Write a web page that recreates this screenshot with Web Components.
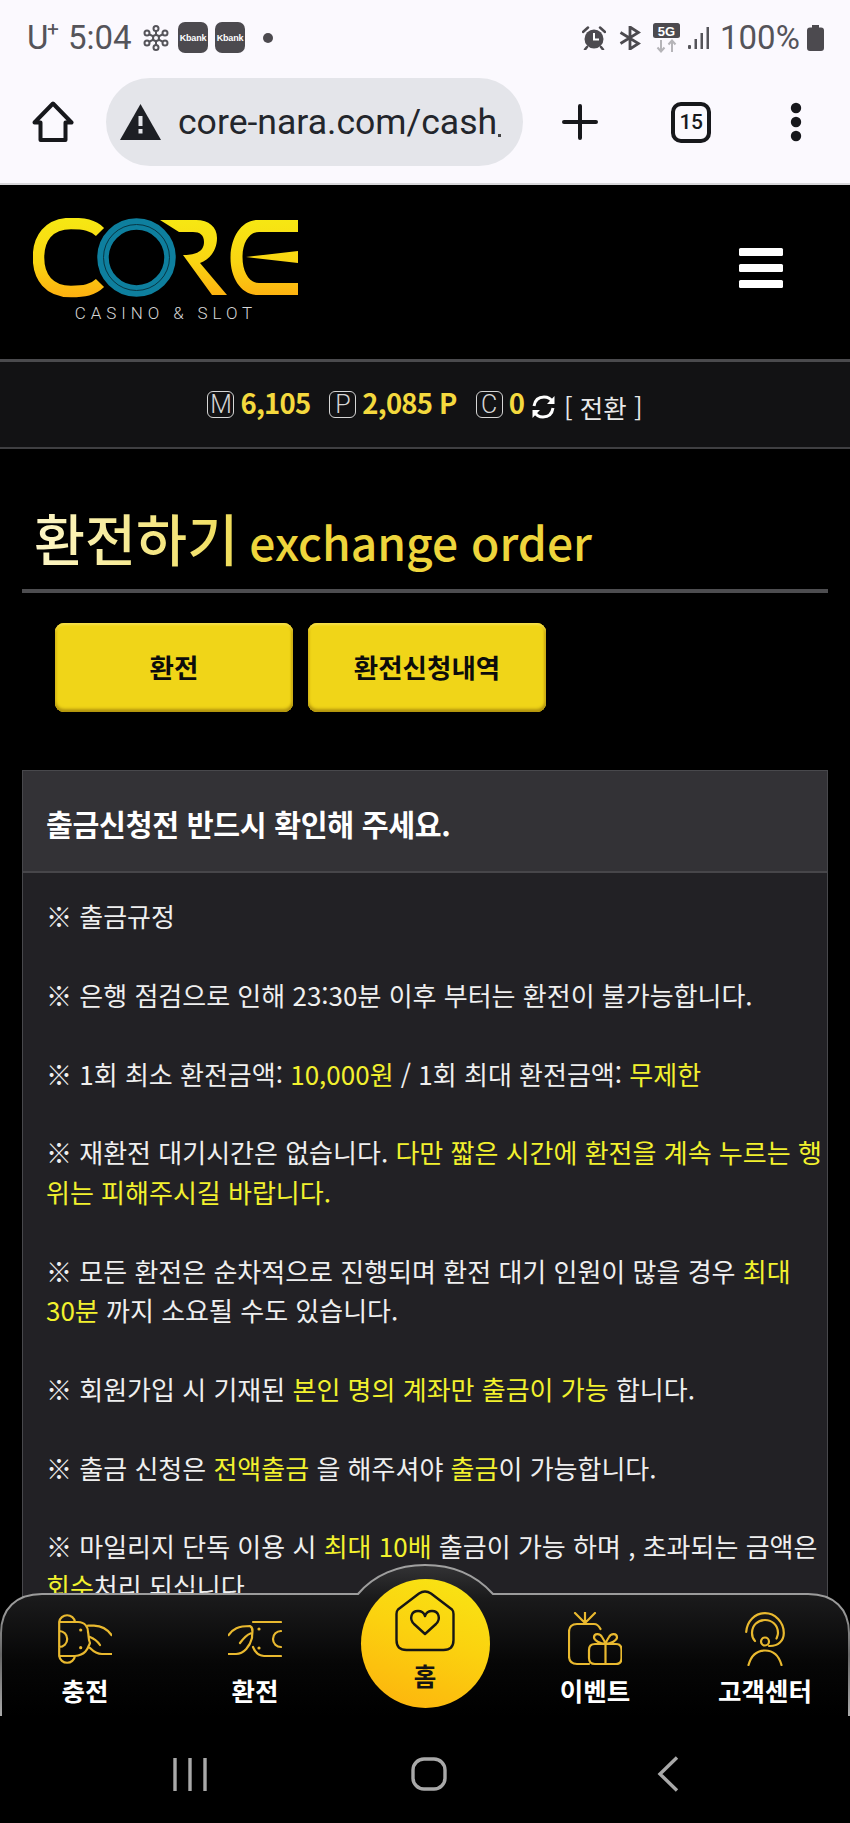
<!DOCTYPE html>
<html lang="ko">
<head>
<meta charset="utf-8">
<title>CORE 환전하기</title>
<style>
html,body{margin:0;padding:0;background:#000}
body{width:850px;height:1823px;overflow:hidden;font-family:"Noto Sans CJK KR","Noto Sans",sans-serif;display:flex;flex-direction:column}
</style>
</head>
<body>
<status-bar></status-bar>
<browser-bar url="core-nara.com/cash" tabs="15"></browser-bar>
<site-page>
  <site-header></site-header>
  <balance-bar></balance-bar>
  <page-title main="환전하기" sub="exchange order"></page-title>
  <tab-buttons><gold-button>환전</gold-button><gold-button>환전신청내역</gold-button></tab-buttons>
  <notice-card>
    <span slot="heading">출금신청전 반드시 확인해 주세요.</span>
    <notice-item>※ 출금규정</notice-item>
    <notice-item>※ 은행 점검으로 인해 23:30분 이후 부터는 환전이 불가능합니다.</notice-item>
    <notice-item>※ 1회 최소 환전금액: <hl-text>10,000원</hl-text> / 1회 최대 환전금액: <hl-text>무제한</hl-text></notice-item>
    <notice-item>※ 재환전 대기시간은 없습니다. <hl-text>다만 짧은 시간에 환전을 계속 누르는 행위는 피해주시길 바랍니다.</hl-text></notice-item>
    <notice-item>※ 모든 환전은 순차적으로 진행되며 환전 대기 인원이 많을 경우 <hl-text>최대 30분</hl-text> 까지 소요될 수도 있습니다.</notice-item>
    <notice-item>※ 회원가입 시 기재된 <hl-text>본인 명의 계좌만 출금이 가능</hl-text> 합니다.</notice-item>
    <notice-item>※ 출금 신청은 <hl-text>전액출금</hl-text> 을 해주셔야 <hl-text>출금</hl-text>이 가능합니다.</notice-item>
    <notice-item>※ 마일리지 단독 이용 시 <hl-text>최대 10배</hl-text> 출금이 가능 하며 , 초과되는 금액은 <hl-text>회수</hl-text>처리 되십니다.</notice-item>
  </notice-card>
  <bottom-nav>
    <nav-item label="충전"><svg viewBox="0 0 54 54" width="54" height="54" fill="none" stroke="#e9b92f" stroke-width="2.2" stroke-linecap="round" stroke-linejoin="round"><path d="M1.2 10V44M1.2 10A8 8 0 0 1 17 10M1.2 44A8 8 0 0 0 17 44M1.2 10H20C27 10 30 15 30 20C31 24 30 27 32 31C30 36 28 43 17 44H1.2M1.2 19A8 8 0 0 1 1.2 35M30 13.6H36C44 14 50 18 53.5 23M32 25C37 27 40 30 42 33M32 36C36 40 39 42 44 42H53.5"/><circle cx="22.7" cy="18" r="1.6" fill="#e9b92f" stroke="none"/><circle cx="22.7" cy="35.7" r="1.6" fill="#e9b92f" stroke="none"/></svg></nav-item>
    <nav-item label="환전"><svg viewBox="0 0 54 54" width="54" height="54" fill="none" stroke="#e9b92f" stroke-width="2.2" stroke-linecap="round" stroke-linejoin="round"><path d="M25 10H53M.6 23C5 17 10 14 22 14C26 16 24 20 24 26C22 34 16 42 8 42H.6M12 31C15 27 18 23 22.5 21.5M25 35C27 40 30 44 36 44H53M53 19A8 8 0 1 0 53 35"/><circle cx="31" cy="17" r="1.6" fill="#e9b92f" stroke="none"/><circle cx="31" cy="36" r="1.6" fill="#e9b92f" stroke="none"/></svg></nav-item>
    <home-button></home-button>
    <nav-item label="이벤트"><svg viewBox="0 0 54 54" width="54" height="54" fill="none" stroke="#e9b92f" stroke-width="2.2" stroke-linecap="round" stroke-linejoin="round"><path d="M17 11L7 1M17 11V.5M17 11L27 1M32.5 17C31 14 29 12 26 12H9C4 12 1 15 1 20V44C1 49 4 52 9 52H21M27 52H48C52 52 53.5 50 53.5 46V38C53.5 34 52 32 48 32H27C23 32 21 34 21 38V46C21 50 23 52 27 52ZM37.5 32V52M37.5 32C32 32 26 28 26 25.5C26 21 32 21 34 25C36 28 37 30 37.5 32C38 30 39 28 41 25C43 21 49 21 49 25.5C49 28 43 32 37.5 32Z"/></svg></nav-item>
    <nav-item label="고객센터"><svg viewBox="0 0 40 54" width="40" height="54" fill="none" stroke="#e9b92f" stroke-width="2.2" stroke-linecap="round" stroke-linejoin="round"><path d="M1.2 20C2 9 10 1.2 20 1.2C30 1.2 38.8 10 38.8 21C38.8 29 33 34 25 34H24M10 29C8 27 7 24 7 21C7 13 13 8 20 8C27 8 33 13 33 21C33 23 32 25 31.5 26.5M3.5 53C6 44 12 38.5 20 38.5C28 38.5 34 44 36.5 53"/><circle cx="20" cy="29.5" r="4"/></svg></nav-item>
  </bottom-nav>
</site-page>
<android-nav></android-nav>
<script>
const def=(name,css,html)=>{
  customElements.define(name,class extends HTMLElement{
    constructor(){super();const r=this.attachShadow({mode:'open'});
      r.innerHTML='<style>'+css+'</style>'+(typeof html==='function'?html(this):html);}
  });
};

def('status-bar',`
:host{display:flex;align-items:center;height:75px;background:#fbf9fe;color:#55545a;font:400 33px Roboto,sans-serif;flex:none;padding-left:27px;padding-right:26px;box-sizing:border-box}
.u{width:19px}.plus{font-size:21px;font-weight:400;align-self:flex-start;margin:19px 0 0 1px;line-height:1;width:21px}
.t{width:75px}
.k{display:flex;align-items:center;justify-content:center;width:30px;height:31px;border-radius:7px;background:#4c4a4f;color:#fff;font:700 9px "Liberation Sans",sans-serif;letter-spacing:-.2px;margin-right:7px}
.dot{width:10px;height:10px;border-radius:50%;background:#4c4a4f}
.sp{flex:1}
svg{display:block;flex:none}
.pct{margin-left:10px;width:87px}
`,`
<span class="u">U</span><span class="plus">+</span><span class="t">5:04</span>
<svg width="26" height="26" viewBox="0 0 26 26" fill="none" stroke="#55545a" stroke-width="2" style="margin-right:9px"><circle cx="13" cy="13" r="3"/><circle cx="13" cy="3.5" r="2.5"/><circle cx="13" cy="22.5" r="2.5"/><circle cx="4" cy="8" r="2.5"/><circle cx="22" cy="8" r="2.5"/><circle cx="4" cy="18" r="2.5"/><circle cx="22" cy="18" r="2.5"/><path d="M13 6V10M13 16V20M6 9.2L10.5 11.5M20 9.2L15.5 11.5M6 16.8L10.5 14.5M20 16.8L15.5 14.5"/></svg>
<span class="k">Kbank</span><span class="k">Kbank</span>
<span class="dot" style="margin-left:11px"></span>
<span class="sp"></span>
<svg width="24" height="24" viewBox="0 0 24 24" style="margin-right:13px"><circle cx="12" cy="13" r="9.5" fill="#4c4a4f"/><path d="M12 7V13.5H17" fill="none" stroke="#fff" stroke-width="2"/><path d="M1 6L6 1.5M23 6L18 1.5M5 21L3 23.5M19 21L21 23.5" stroke="#4c4a4f" stroke-width="2.5" stroke-linecap="round"/></svg>
<svg width="22" height="24" viewBox="0 0 22 24" fill="none" stroke="#4c4a4f" stroke-width="2.8" style="margin-right:12px"><path d="M1.5 6.5L19.5 17.5L11 23V1L19.5 6.5L1.5 17.5"/></svg>
<svg width="27" height="30" viewBox="0 0 27 30" style="margin-right:8px"><rect x="0" y="0" width="27" height="15" rx="2.5" fill="#4c4a4f"/><text x="13.5" y="12.5" text-anchor="middle" font-family="Liberation Sans" font-weight="700" font-size="13" fill="#fff">5G</text><path d="M8 17V28M4.5 24.5L8 28.5L11.5 24.5M19 29V18M15.5 21.5L19 17.5L22.5 21.5" fill="none" stroke="#b5b4b8" stroke-width="2"/></svg>
<svg width="22" height="24" viewBox="0 0 22 24" fill="#55545a"><rect x="0" y="19" width="3" height="4" rx="1"/><rect x="6.5" y="13" width="2.5" height="10"/><rect x="12.5" y="7" width="2.5" height="16"/><rect x="18.5" y="1" width="2.5" height="22"/></svg>
<span class="pct">100%</span>
<svg width="17" height="26" viewBox="0 0 17 26"><path d="M5 0H12V2.5H14C16 2.5 17 3.5 17 5.5V23C17 25 16 26 14 26H3C1 26 0 25 0 23V5.5C0 3.5 1 2.5 3 2.5H5Z" fill="#4c4a4f"/></svg>
`);

def('browser-bar',`
:host{display:flex;align-items:center;height:110px;box-sizing:border-box;background:#fbf9fe;flex:none;border-bottom:2px solid #d8d7da;padding-bottom:14px;position:relative}
svg{display:block;flex:none}
.home{margin-left:32px}
.pill{display:flex;align-items:center;width:417px;height:88px;margin-left:32px;border-radius:44px;background:#e4e5ea;box-sizing:border-box;padding-left:14px;overflow:hidden}
.url{font:400 35.6px Roboto,sans-serif;color:#23262c;margin-left:17px;white-space:nowrap}
.cut{width:3px;height:3px;background:#444;margin:26px 0 0 1px;flex:none}
.plus{margin-left:39px}
.tabs{display:flex;align-items:center;justify-content:center;width:40px;height:41px;box-sizing:border-box;border:4px solid #17181c;border-radius:10px;margin-left:73px;font:500 21px Roboto,sans-serif;color:#17181c;letter-spacing:-.5px}
.more{margin-left:79px}
`,h=>`
<svg class="home" width="42" height="42" viewBox="0 0 42 42" fill="none" stroke="#17181c" stroke-width="4" stroke-linejoin="round"><path d="M21 2.5L39.5 21.5H33.5V39H8.5V21.5H2.5Z"/></svg>
<div class="pill">
<svg width="41" height="36" viewBox="0 0 41 36"><path d="M20.5 0L41 36H0Z" fill="#1d1f24"/><rect x="18.5" y="12" width="4" height="10" fill="#e4e5ea"/><rect x="18.5" y="25" width="4" height="4.5" fill="#e4e5ea"/></svg>
<span class="url">${h.getAttribute('url')}</span><span class="cut"></span></div>
<svg class="plus" width="36" height="36" viewBox="0 0 36 36" stroke="#17181c" stroke-width="4" stroke-linecap="round"><path d="M18 2V34M2 18H34"/></svg>
<span class="tabs">${h.getAttribute('tabs')}</span>
<svg class="more" width="12" height="40" viewBox="0 0 12 40" fill="#17181c"><circle cx="6" cy="6" r="5.2"/><circle cx="6" cy="20" r="5.2"/><circle cx="6" cy="34" r="5.2"/></svg>
`);

def('site-page',`
:host{display:flex;flex-direction:column;flex:none;height:1531px;position:relative;overflow:hidden;background:#000;color:#fff}
`,`<slot></slot>`);

def('site-header',`
:host{display:flex;align-items:flex-start;justify-content:space-between;height:174px;flex:none;background:#000;padding:33px 67px 0 33px;box-sizing:border-box}
.logo{display:flex;flex-direction:column;align-items:center;width:266px}
svg{display:block}
.tag{font:300 17px Roboto,"Liberation Sans",sans-serif;letter-spacing:4.9px;color:#d6d6d6;line-height:18px;margin-top:6px;white-space:nowrap}
.menu{display:flex;flex-direction:column;gap:8.5px;margin-top:30px;width:44px}
.menu i{display:block;height:7.5px;border-radius:1.5px;background:#fff}
`,`
<div class="logo">
<svg width="266" height="80" viewBox="0 0 266 80">
<defs><linearGradient id="g" gradientUnits="userSpaceOnUse" x1="0" y1="0" x2="0" y2="80"><stop offset="0" stop-color="#f6e813"/><stop offset=".55" stop-color="#f9d512"/><stop offset="1" stop-color="#fdaf10"/></linearGradient></defs>
<path d="M67 14C60 7 51 5.5 38 5.5C15 5.5 5.5 21 5.5 39.5C5.5 59 16 73.5 38 73.5C51 73.5 60 72 67 65" fill="none" stroke="url(#g)" stroke-width="11.5"/>
<circle cx="103.5" cy="39.5" r="33.5" fill="none" stroke="#0e7f9e" stroke-width="11.5"/>
<circle cx="103.5" cy="39.5" r="33" fill="none" stroke="#073644" stroke-width="1"/>
<path d="M127 2H163C176 2 184 9 184 20C184 33 176 42 167 45L194 77H179L150 37C160 37 171 35 171 24C171 17 167 14 160 14H146Z" fill="url(#g)"/>
<path d="M265 2V14H226C216 14 209.5 25 209.5 39C209.5 54 216 65 226 65H265V77H225C208 77 197.5 60 197.5 40C197.5 20 208 2 225 2Z" fill="url(#g)"/>
<path d="M213 39L265 33V45Z" fill="url(#g)"/>
</svg>
<span class="tag">CASINO &amp; SLOT</span>
</div>
<div class="menu"><i></i><i></i><i></i></div>
`);

def('balance-bar',`
:host{display:flex;align-items:center;justify-content:center;height:90px;box-sizing:border-box;flex:none;background:#121214;border-top:3px solid #4a4a4d;border-bottom:2px solid #3f3f42;font-family:"Noto Sans CJK KR",sans-serif;padding-bottom:1px}
.b{display:flex;align-items:center;justify-content:center;width:27px;height:27px;box-sizing:border-box;border:1.5px solid #d6d6d6;border-radius:6px;color:#d6d6d6;font:300 25px Roboto,sans-serif;margin-right:6px}
.n{font-size:27.5px;font-weight:700;color:#f4d93e;letter-spacing:-.8px;line-height:1;margin-top:-2px}
.m{margin-right:19px}
svg{display:block;margin:6px 8px 0 7px}
.c{font-size:25.5px;color:#e8e8e8;line-height:1;margin-top:5px;white-space:pre}
`,`
<span class="b">M</span><span class="n m">6,105</span>
<span class="b">P</span><span class="n m">2,085 P</span>
<span class="b">C</span><span class="n">0</span>
<svg width="25" height="24" viewBox="0 0 25 24" fill="none" stroke="#fff" stroke-width="3"><path d="M3 11C4 5 8 2 13 2C17 2 20 4 21.5 7"/><path d="M22 13C21 19 17 22 12 22C8 22 5 20 3.5 17"/><path d="M23.5 1V9H16Z M1.5 23V15H9Z" fill="#fff" stroke="none"/></svg>
<span class="c">[ 전환 ]</span>
`);

def('page-title',`
:host{display:flex;flex-direction:column;flex:none;height:144px;box-sizing:border-box;margin:0 22px;border-bottom:4px solid #4d4d50;padding:56px 0 0 12px}
h1{margin:0;display:flex;align-items:baseline;font-weight:500;line-height:64px;white-space:nowrap}
.a{font-size:55.5px;background:linear-gradient(90deg,#fdf6c8,#efdc58);-webkit-background-clip:text;background-clip:text;color:transparent}
.b{font-size:46.2px;color:#eed53c;margin-left:11px}
`,h=>`<h1><span class="a">${h.getAttribute('main')}</span><span class="b">${h.getAttribute('sub')}</span></h1>`);

def('tab-buttons',`
:host{display:flex;gap:15px;flex:none;padding:30px 0 0 55px;height:177px;box-sizing:border-box;background:#000}
`,`<slot></slot>`);

def('gold-button',`
:host{display:flex;align-items:center;justify-content:center;width:238px;height:89px;border-radius:9px;background:#f0d518;color:#0c0c0c;font-size:26.5px;font-weight:700;box-shadow:inset 0 -3px 3px #b2950e,inset 0 2px 2px #f6e04a,inset 2px 0 2px #e6c814,inset -2px 0 2px #d0b010;padding-bottom:2px;box-sizing:border-box}
`,`<slot></slot>`);

def('notice-card',`
:host{display:block;flex:none;margin:0 22px;background:#222125;box-sizing:border-box;border-left:1px solid #48484c;border-right:1px solid #48484c;border-top:1px solid #48484c}
.h{height:102px;box-sizing:border-box;background:#333236;border-bottom:2px solid #47464a;display:flex;align-items:center;padding:3px 0 0 23px;font-size:29.2px;font-weight:700;color:#fff;letter-spacing:-.3px}
.b{padding:23px 2px 40px 23px;display:flex;flex-direction:column;gap:39.4px;font-size:26px;line-height:39.4px;color:#efefef}
`,`<div class="h"><slot name="heading"></slot></div><div class="b"><slot></slot></div>`);

def('notice-item',`:host{display:block}`,`<slot></slot>`);
def('hl-text',`:host{display:inline;color:#f2f12e}`,`<slot></slot>`);

def('bottom-nav',`
:host{position:absolute;left:0;right:0;bottom:0;height:153px;display:grid;grid-template-columns:repeat(5,170px);font-family:"Noto Sans CJK KR",sans-serif}
svg.bg{position:absolute;left:0;top:0;display:block}
::slotted(*){position:relative}
`,`
<svg class="bg" width="850" height="153" viewBox="0 0 850 153">
<defs>
<linearGradient id="f" x1="0" y1="0" x2="0" y2="1"><stop offset="0" stop-color="#333335"/><stop offset=".22" stop-color="#1a1a1b"/><stop offset=".65" stop-color="#060606"/><stop offset="1" stop-color="#000"/></linearGradient>
<linearGradient id="s" gradientUnits="userSpaceOnUse" x1="0" y1="0" x2="0" y2="153"><stop offset="0" stop-color="#a0a0a0"/><stop offset=".3" stop-color="#9a9a9a"/><stop offset=".6" stop-color="#666"/><stop offset="1" stop-color="#aaa"/></linearGradient>
</defs>
<path d="M1 153V70C1 46 16 31 42 31H358C374 12 398 2 425 2C452 2 476 12 493 31H808C834 31 849 46 849 70V153" fill="url(#f)" stroke="url(#s)" stroke-width="2"/>
</svg>
<slot></slot>`);

def('nav-item',`
:host{display:flex;flex-direction:column;align-items:center;padding-top:49px;color:#fff;font-weight:700;font-size:25.5px;line-height:32px}
svg,::slotted(svg){display:block}
.l{margin-top:8px;white-space:nowrap}
`,h=>`<slot></slot><span class="l">${h.getAttribute('label')}</span>`);

def('home-button',`
:host{display:flex;flex-direction:column;align-items:center;width:129px;height:129px;margin:16px 0 0 20.5px;border-radius:50%;background:linear-gradient(200deg,#f8e414 5%,#fbd20f 45%,#fdb10d 100%);color:#141414;font-weight:700;font-size:24.5px;line-height:30px;box-sizing:border-box;padding-top:11px}
svg{display:block}
span{margin-top:9px}
`,`<svg width="62" height="62" viewBox="0 0 62 62" fill="none" stroke="#161616" stroke-width="2.4" stroke-linejoin="round"><path d="M4 19.5L25 3.5Q31 -.5 37 3.5L58 19.5Q59.5 21 59.5 24V50Q59.5 60 49.5 60H12.5Q2.5 60 2.5 50V24Q2.5 21 4 19.5Z"/><path d="M31 44L20 34C15 29 17 21 24 21C27 21 30 23 31 26C32 23 35 21 38 21C45 21 47 29 42 34Z"/></svg><span>홈</span>`);

def('android-nav',`
:host{display:block;flex:none;height:107px;background:#000;position:relative}
.r{display:flex;justify-content:space-between;align-items:center;padding:40px 171px 0 173px}
svg{display:block}
.o{margin-right:6px}
`,`<div class="r">
<svg width="34" height="34" viewBox="0 0 34 34" stroke="#a9a9a9" stroke-width="3.4"><path d="M2 1V34M17 1V34M32 1V34"/></svg>
<svg class="o" width="36" height="34" viewBox="0 0 36 34" fill="none" stroke="#a9a9a9" stroke-width="3.4"><rect x="2" y="2" width="32" height="30" rx="11"/></svg>
<svg width="22" height="36" viewBox="0 0 22 36" fill="none" stroke="#a9a9a9" stroke-width="3.4"><path d="M20 1.5L3 18L20 34.5"/></svg>
</div>`);
</script>
</body>
</html>
